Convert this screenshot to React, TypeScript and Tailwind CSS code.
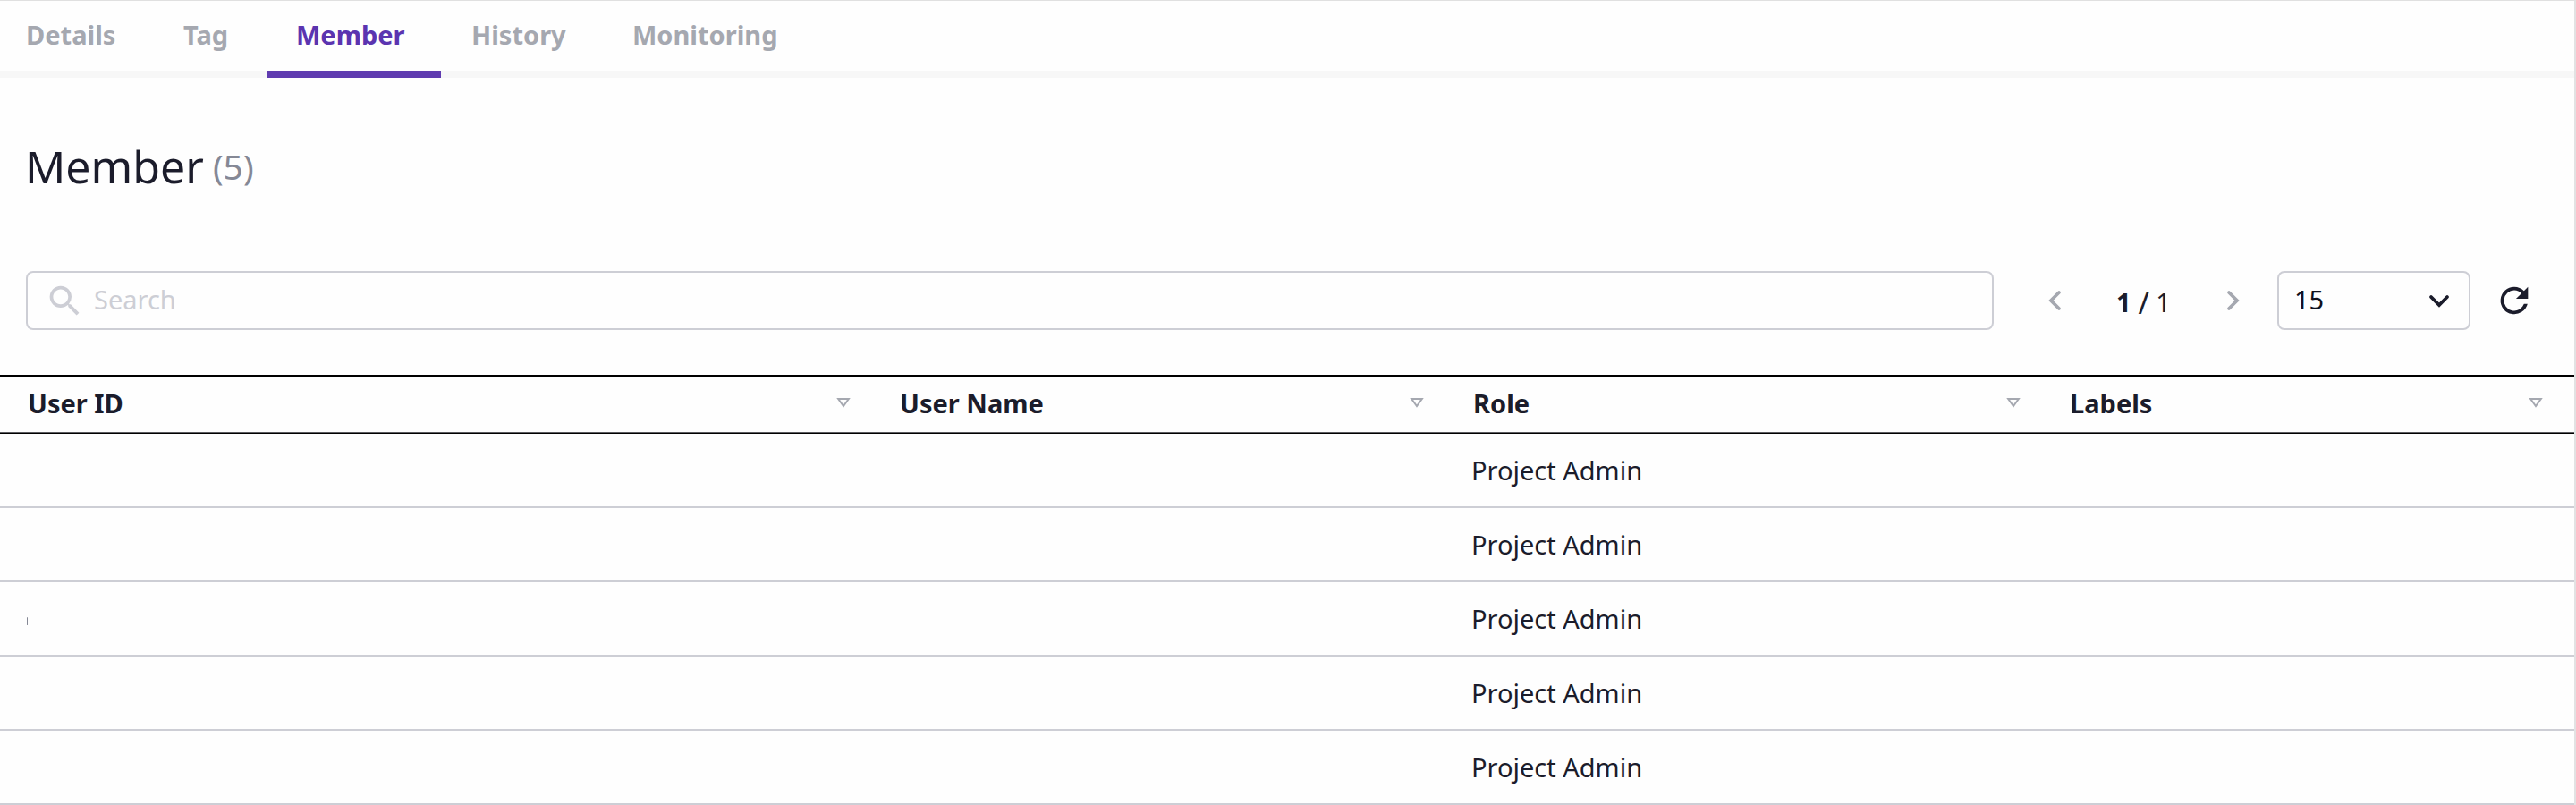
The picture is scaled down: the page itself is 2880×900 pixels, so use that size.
import { type ReactNode } from 'react';

const tabs = [
  { label: 'Details', box: 'w-[169px] pl-[29px]' },
  { label: 'Tag', box: 'w-[130px] pl-[36px]' },
  { label: 'Member', box: 'w-[194px] pl-[32px]', active: true },
  { label: 'History', box: 'w-[180px] pl-[34px]' },
  { label: 'Monitoring', box: 'w-[230px] pl-[34px]' },
];

const columns = ['User ID', 'User Name', 'Role', 'Labels'];
const members = [
  { role: 'Project Admin' },
  { role: 'Project Admin' },
  { role: 'Project Admin', marked: true },
  { role: 'Project Admin' },
  { role: 'Project Admin' },
];

const grid = 'grid grid-cols-[975px_641px_667px_595px]';

function Chevron({ d, className }: { d: string; className: string }) {
  return (
    <svg viewBox="0 0 24 24" fill="none" stroke="currentColor" strokeWidth="3.8" strokeLinecap="round" strokeLinejoin="miter" className={className}>
      <path d={d} />
    </svg>
  );
}

function HeaderCell({ children }: { children: ReactNode }) {
  return (
    <div className="flex items-center justify-between pl-[31px] pr-[24px] last:pr-[35px] font-bold">
      <span className="pb-[2px]">{children}</span>
      <svg viewBox="0 0 16 12" className="mb-1 h-3 w-4 text-[#a5a8b0]" fill="none" stroke="currentColor" strokeWidth="2">
        <path d="M2.2 2h11.6L8 10z" />
      </svg>
    </div>
  );
}

export default function App() {
  return (
    <div className="h-[900px] w-[2880px] overflow-hidden border-r-2 border-t border-r-[#e2e2e3] border-t-[#e0e0e0] bg-[#fefefe] font-['Noto_Sans',sans-serif] text-[29px] leading-10 text-[#1b1c2b]">
      <nav className="flex h-[86px] border-b-8 border-[#f7f7f7] font-bold text-[#a5a8b0]">
        {tabs.map((tab) => (
          <div
            key={tab.label}
            className={`${tab.box} h-[86px] border-b-8 pt-[18px] ${tab.active ? 'border-[#5f3bb0] text-[#5b34b0]' : 'border-transparent'}`}
          >
            {tab.label}
          </div>
        ))}
      </nav>

      <h1 className="flex h-[216px] items-start gap-[10px] pl-[28px] pt-[65px] text-[50px] leading-[68px]">
        Member <span className="text-[39px] text-[#858895]">(5)</span>
      </h1>

      <div className="flex h-[66px] items-center">
        <div className="ml-[29px] flex h-[66px] w-[2200px] items-center rounded-lg border-2 border-[#cdced5] pl-[19px] text-[#cdced5]">
          <svg viewBox="0 0 24 24" fill="currentColor" className="size-[45px]">
            <path d="M15.5 14h-.79l-.28-.27A6.47 6.47 0 0 0 16 9.5 6.5 6.5 0 1 0 9.5 16c1.61 0 3.09-.59 4.23-1.57l.27.28v.79l5 4.99L20.49 19zm-6 0C7.01 14 5 11.99 5 9.5S7.01 5 9.5 5 14 7.01 14 9.5 11.99 14 9.5 14" />
          </svg>
          <span className="ml-[10px] pb-[2px]">Search</span>
        </div>
        <Chevron d="M17 3L8 12l9 9" className="ml-[56px] size-6 text-[#a5a8b0]" />
        <div className="ml-[57px] flex w-[60px] items-center pt-[3px]">
          <b>1</b>
          <span className="ml-[8px] text-[34px] leading-10">/</span>
          <span className="ml-[7px]">1</span>
        </div>
        <Chevron d="M8 3l9 9-9 9" className="ml-[58px] size-6 text-[#a5a8b0]" />
        <div className="ml-[38px] flex h-[66px] w-[216px] items-center justify-between rounded-lg border-2 border-[#cdced5] pl-[17px] pr-[21px] text-[#0f101c]">
          <span className="pb-[2px]">15</span>
          <Chevron d="M3 8l9 9 9-9" className="size-6 text-[#1b1c2b]" />
        </div>
        <svg viewBox="0 0 24 24" fill="currentColor" className="ml-[26px] size-[46px]">
          <path d="M17.65 6.35A7.96 7.96 0 0 0 12 4a8 8 0 1 0 7.73 10h-2.08A6 6 0 1 1 12 6c1.66 0 3.14.69 4.22 1.78L13 11h7V4z" />
        </svg>
      </div>

      <div className={`${grid} mt-[50px] h-[65px] border-t-2 border-b border-t-black border-b-[#5c5c60]`}>
        {columns.map((name) => (
          <HeaderCell key={name}>{name}</HeaderCell>
        ))}
      </div>
      <div className="h-px bg-black" />
      {members.map((member, i) => (
        <div key={i} className={`${grid} h-[83px] items-center border-b-2 border-[#cdced5]`}>
          <span className="pl-[30px]">
            {member.marked && <span className="mt-[5px] block h-[9px] w-px rounded-full bg-[#858895]" />}
          </span>
          <span />
          <span className="pl-[29px]">{member.role}</span>
          <span />
        </div>
      ))}
    </div>
  );
}
